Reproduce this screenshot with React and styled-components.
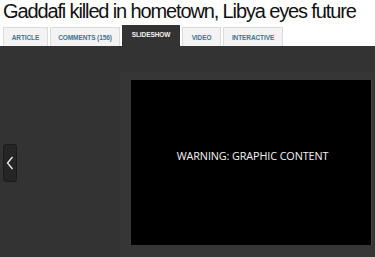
import React from "react";
import styled, { createGlobalStyle } from "styled-components";

const Global = createGlobalStyle`
  html, body { margin: 0; padding: 0; background: #fff; }
  body { width: 375px; height: 257px; overflow: hidden; }
  #root { height: 257px; }
`;

const Page = styled.div`
  height: 257px;
  display: flex;
  flex-direction: column;
  background: #fff;
`;

const Title = styled.h1`
  margin: 0;
  padding: 0 0 0 3px;
  height: 25px;
  font-family: "Liberation Sans", Arial, sans-serif;
  font-weight: normal;
  font-size: 20px;
  line-height: 23px;
  color: #111;
  white-space: nowrap;
  letter-spacing: -1.13px;
`;

const Tabs = styled.nav`
  display: flex;
  align-items: flex-end;
  gap: 2px;
  padding-left: 3px;
  height: 21px;
`;

const Tab = styled.div`
  width: ${(p) => p.w}px;
  height: ${(p) => (p.active ? 21 : 19)}px;
  box-sizing: border-box;
  display: flex;
  align-items: center;
  justify-content: center;
  padding-bottom: ${(p) => (p.active ? 4 : 0)}px;
  background: ${(p) => (p.active ? "#333" : "#f3f3f3")};
  border: 1px solid ${(p) => (p.active ? "#333" : "#dcdcdc")};
  border-bottom: none;
  font-family: "Liberation Sans", Arial, sans-serif;
  font-weight: bold;
  font-size: 6.5px;
  letter-spacing: -0.1px;
  color: ${(p) => (p.active ? "#f2f2f2" : "#3f7394")};
  text-transform: uppercase;
`;

const Panel = styled.section`
  flex: 1;
  position: relative;
  background: #333;
  display: flex;
  padding: 26px 0 0 120px;
`;

const Stage = styled.div`
  flex: 1;
  background: #363636;
  padding: 8px 3px 12px 11px;
  display: flex;
`;

const Slide = styled.div`
  flex: 1;
  height: 165px;
  background: #000;
  border-right: 1px solid #444;
  display: flex;
  align-items: center;
  justify-content: center;
  padding-bottom: 14px;
  padding-left: 3px;
  box-sizing: border-box;
  font-family: "Open Sans", "DejaVu Sans", sans-serif;
  font-size: 10.8px;
  color: #f4f4f4;
  letter-spacing: -0.1px;
`;

const PrevButton = styled.button`
  position: absolute;
  left: 3px;
  top: 98px;
  width: 14px;
  height: 38px;
  padding: 0;
  background: #252525;
  border: 1px solid #1b1b1b;
  border-radius: 3px;
  display: flex;
  align-items: center;
  justify-content: center;
  cursor: pointer;
`;

const tabs = [
  { label: "Article", w: 45 },
  { label: "Comments (156)", w: 70 },
  { label: "Slideshow", w: 58, active: true },
  { label: "Video", w: 39 },
  { label: "Interactive", w: 60 },
];

export default function App() {
  return (
    <>
      <Global />
      <Page>
        <Title>Gaddafi killed in hometown, Libya eyes future</Title>
        <Tabs>
          {tabs.map((t) => (
            <Tab key={t.label} w={t.w} active={t.active}>
              {t.label}
            </Tab>
          ))}
        </Tabs>
        <Panel>
          <PrevButton aria-label="Previous">
            <svg width="8" height="14" viewBox="0 0 8 14">
              <path d="M6.5 1 L1.5 7 L6.5 13" fill="none" stroke="#f0f0f0" strokeWidth="1.3" />
            </svg>
          </PrevButton>
          <Stage>
            <Slide>WARNING: GRAPHIC CONTENT</Slide>
          </Stage>
        </Panel>
      </Page>
    </>
  );
}
